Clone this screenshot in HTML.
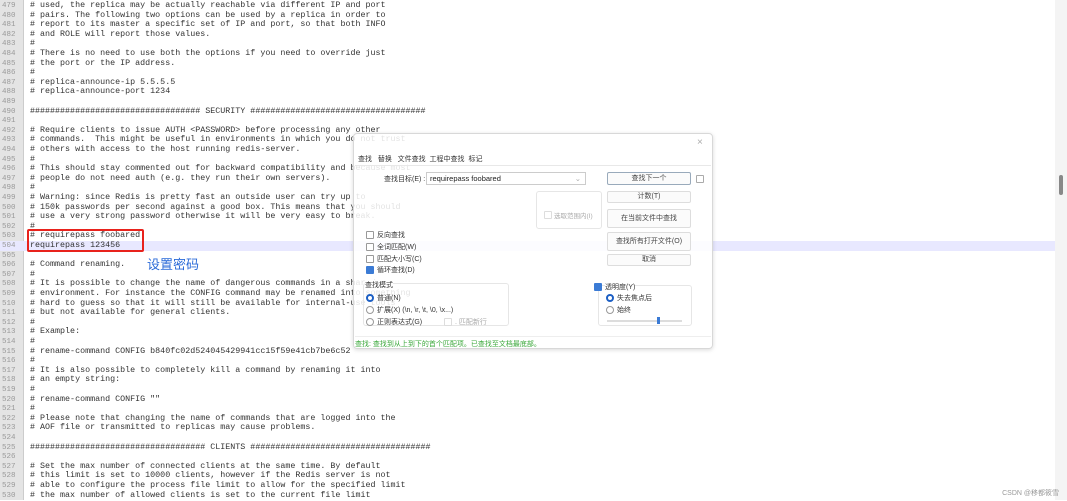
<!DOCTYPE html>
<html><head><meta charset="utf-8"><style>
*{margin:0;padding:0;box-sizing:border-box}
body{width:1067px;height:500px;overflow:hidden;background:#fff;position:relative;font-family:"Liberation Mono",monospace}
#gut{position:absolute;left:0;top:0;width:24px;height:500px;background:#e4e4e4;border-right:1px solid #ccc}
.ln{position:absolute;left:0;width:1067px;height:9.6px;line-height:9.6px;font-size:8.35px;white-space:pre;color:#333}
.ln b{font-weight:normal;display:inline-block;width:24px;text-align:left;padding-left:2px;color:#999;font-size:7.5px}
.ln span{position:absolute;left:30px}
.cur{background:#e8e8ff}
.ui{font-family:"Liberation Sans","Noto Sans CJK SC",sans-serif;font-size:7px;color:#333;position:absolute;white-space:nowrap}
.btn{position:absolute;border:1px solid #ddd;background:rgba(250,250,250,.8);border-radius:2px;font-family:"Liberation Sans","Noto Sans CJK SC",sans-serif;font-size:7px;color:#444;text-align:center}
.cb{position:absolute;width:8px;height:8px;border:1px solid #999;border-radius:1px;background:#fff}
.cb.on{background:#3b7bd5;border-color:#3b7bd5}
.rd{position:absolute;width:8px;height:8px;border:1px solid #999;border-radius:50%;background:#fff}
.rd.on{border:2.5px solid #1c5fc4}
.grp{position:absolute;border:1px solid #e6e6e6;border-radius:3px}
</style></head><body>
<div id="gut"></div>
<div id="code"></div>
<script>
var L=["# used, the replica may be actually reachable via different IP and port","# pairs. The following two options can be used by a replica in order to","# report to its master a specific set of IP and port, so that both INFO","# and ROLE will report those values.","#","# There is no need to use both the options if you need to override just","# the port or the IP address.","#","# replica-announce-ip 5.5.5.5","# replica-announce-port 1234","","################################## SECURITY ###################################","","# Require clients to issue AUTH <PASSWORD> before processing any other","# commands.  This might be useful in environments in which you do not trust","# others with access to the host running redis-server.","#","# This should stay commented out for backward compatibility and because most","# people do not need auth (e.g. they run their own servers).","#","# Warning: since Redis is pretty fast an outside user can try up to","# 150k passwords per second against a good box. This means that you should","# use a very strong password otherwise it will be very easy to break.","#","# requirepass foobared","requirepass 123456","","# Command renaming.","#","# It is possible to change the name of dangerous commands in a shared","# environment. For instance the CONFIG command may be renamed into something","# hard to guess so that it will still be available for internal-use tools","# but not available for general clients.","#","# Example:","#","# rename-command CONFIG b840fc02d524045429941cc15f59e41cb7be6c52","#","# It is also possible to completely kill a command by renaming it into","# an empty string:","#","# rename-command CONFIG \"\"","#","# Please note that changing the name of commands that are logged into the","# AOF file or transmitted to replicas may cause problems.","","################################### CLIENTS ####################################","","# Set the max number of connected clients at the same time. By default","# this limit is set to 10000 clients, however if the Redis server is not","# able to configure the process file limit to allow for the specified limit","# the max number of allowed clients is set to the current file limit"];
var h="";for(var i=0;i<L.length;i++){var t=L[i].replace(/&/g,"&amp;").replace(/</g,"&lt;").replace(/>/g,"&gt;");h+='<div class="ln'+(i==25?' cur':'')+'" style="top:'+(1+i*9.6).toFixed(1)+'px"><b>'+(479+i)+'</b><span>'+t+'</span></div>';}
document.getElementById("code").innerHTML=h;
</script>
<div style="position:absolute;left:27px;top:229px;width:117px;height:23px;border:2px solid #e8221c;border-radius:2px"></div>
<div style="position:absolute;left:147px;top:254px;font-family:'Liberation Sans','Noto Sans CJK SC',sans-serif;font-size:13px;color:#2a6ad8">设置密码</div>
<div style="position:absolute;left:1055px;top:0;width:12px;height:500px;background:#f4f4f4"></div>
<div style="position:absolute;left:1059px;top:175px;width:4px;height:20px;background:#888;border-radius:2px"></div>
<div class="ui" style="right:8px;top:488px;color:#999;font-size:7px">CSDN @移都筱雪</div>

<div style="position:absolute;left:353px;top:133px;width:360px;height:216px;background:rgba(255,255,255,.86);border:1px solid #d8d8d8;border-radius:4px;box-shadow:0 1px 4px rgba(0,0,0,.15)">
<div class="ui" style="left:343px;top:3px;font-size:10px;color:#aaa">×</div>
<div class="ui" style="left:4px;top:20px">查找 &nbsp; 替换 &nbsp; 文件查找 &nbsp;工程中查找 &nbsp;标记</div>
<div style="position:absolute;left:1px;top:31px;width:356px;border-top:1px solid #e8e8e8"></div>
<div class="ui" style="left:30px;top:40px">查找目标(E) :</div>
<div style="position:absolute;left:72px;top:38px;width:160px;height:13px;border:1px solid #ccc;background:#fff;font-family:'Liberation Sans',sans-serif;font-size:7.5px;line-height:11px;padding-left:3px;color:#222">requirepass foobared<span style="position:absolute;right:4px;color:#aaa">⌄</span></div>
<div class="btn" style="left:253px;top:38px;width:84px;height:13px;line-height:11px;border-color:#9ab">查找下一个</div>
<div class="cb" style="left:342px;top:41px;border-color:#aaa"></div>
<div class="grp" style="left:182px;top:57px;width:66px;height:38px"></div>
<div class="cb" style="left:190px;top:77px;border-color:#ddd"></div><div class="ui" style="left:200px;top:76px;color:#aaa;font-size:6.5px">选取范围内(I)</div>
<div class="btn" style="left:253px;top:57px;width:84px;height:12px;line-height:10px">计数(T)</div>
<div class="btn" style="left:253px;top:75px;width:84px;height:19px;line-height:17px">在当前文件中查找</div>
<div class="btn" style="left:253px;top:98px;width:84px;height:19px;line-height:17px">查找所有打开文件(O)</div>
<div class="btn" style="left:253px;top:120px;width:84px;height:12px;line-height:10px">取消</div>
<div class="cb" style="left:12px;top:97px"></div><div class="ui" style="left:23px;top:96px">反向查找</div>
<div class="cb" style="left:12px;top:109px"></div><div class="ui" style="left:23px;top:108px">全词匹配(W)</div>
<div class="cb" style="left:12px;top:121px"></div><div class="ui" style="left:23px;top:120px">匹配大小写(C)</div>
<div class="cb on" style="left:12px;top:132px"></div><div class="ui" style="left:23px;top:131px">循环查找(D)</div>
<div class="grp" style="left:9px;top:149px;width:146px;height:43px"></div>
<div class="ui" style="left:11px;top:146px;background:rgba(255,255,255,.9)">查找模式</div>
<div class="rd on" style="left:12px;top:160px"></div><div class="ui" style="left:23px;top:159px">普通(N)</div>
<div class="rd" style="left:12px;top:172px"></div><div class="ui" style="left:23px;top:171px">扩展(X) (\n, \r, \t, \0, \x...)</div>
<div class="rd" style="left:12px;top:184px"></div><div class="ui" style="left:23px;top:183px">正则表达式(G)</div>
<div class="cb" style="left:90px;top:184px;border-color:#ddd"></div><div class="ui" style="left:101px;top:183px;color:#aaa">. 匹配新行</div>
<div class="grp" style="left:244px;top:151px;width:94px;height:41px"></div>
<div class="cb on" style="left:240px;top:149px"></div><div class="ui" style="left:251px;top:148px;background:rgba(255,255,255,.9)">透明度(Y)</div>
<div class="rd on" style="left:252px;top:160px"></div><div class="ui" style="left:263px;top:159px">失去焦点后</div>
<div class="rd" style="left:252px;top:172px"></div><div class="ui" style="left:263px;top:171px">始终</div>
<div style="position:absolute;left:253px;top:186px;width:75px;height:2px;background:#ddd"></div>
<div style="position:absolute;left:303px;top:183px;width:3px;height:7px;background:#3b7bd5"></div>
<div style="position:absolute;left:1px;top:202px;width:356px;border-top:1px solid #eee"></div>
<div class="ui" style="left:1px;top:205px;color:#3aa83a">查找: 查找到从上到下的首个匹配项。已查找至文档最底部。</div>
</div>
</body></html>
